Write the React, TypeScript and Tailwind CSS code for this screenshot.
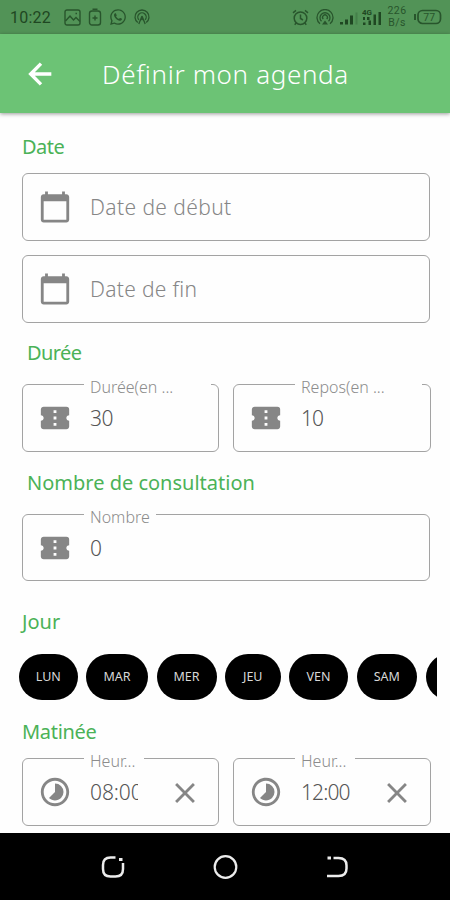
import type { ReactNode } from 'react';
import clsx from 'clsx';
import {
  MdCalendarToday,
  MdClose,
  MdConfirmationNumber,
  MdTimelapse,
} from 'react-icons/md';
import { FaWhatsapp } from 'react-icons/fa';

const days = [
  { label: 'LUN', width: 'w-[58.5px]' },
  { label: 'MAR', width: 'w-[62px]' },
  { label: 'MER', width: 'w-[60px]' },
  { label: 'JEU', width: 'w-[55.5px]' },
  { label: 'VEN', width: 'w-[59px]' },
  { label: 'SAM', width: 'w-[60.5px]' },
];

const StatusBar = () => (
  <div className="h-[34px] shrink-0 bg-[#529357] text-[#28552c] flex items-center pl-[10px] pr-2">
    <span className="w-[42px] pt-[2px] text-[16px] tracking-[0.2px] font-['Roboto',sans-serif] text-[#1f4722]">10:22</span>
    <div className="flex items-center gap-[7px] ml-3">
      <svg width="17" height="17" viewBox="0 0 17 17" fill="none" stroke="currentColor" strokeWidth="1.4">
        <rect x="1" y="1" width="15" height="15" rx="2" />
        <path d="M1.5 12l4.5-5 3.5 4 2.5-2.5 4 4M11.5 4.5h1.5" />
      </svg>
      <svg width="14" height="18" viewBox="0 0 14 18" fill="none" stroke="currentColor" strokeWidth="1.4">
        <rect x="1.5" y="3" width="11" height="14" rx="2.5" />
        <path d="M4.5 1.2h5M7 7.500v5M4.5 10h5" />
      </svg>
      <FaWhatsapp size={18} />
      <svg width="16" height="16" viewBox="0 0 16 16" fill="none" stroke="currentColor" strokeWidth="1.3">
        <path d="M3.8 13.600a7 7 0 1 1 8.400 0M4.800 10.800a4.200 4.200 0 1 1 6.400 0" />
        <path d="M8 7l-3.200 8M8 7l3.200 8M6.200 11.500L8 9.500l1.800 2" />
      </svg>
    </div>
    <div className="flex items-center ml-auto">
      <svg width="17" height="17" viewBox="0 0 17 17" fill="none" stroke="currentColor" strokeWidth="1.5">
        <circle cx="8.5" cy="9.2" r="6.3" />
        <path d="M8.5 5.5v4l2.5 1.5M1 3.8L4 1.3M16 3.8L13 1.3M4.2 14l-1.5 1.7M12.8 14l1.5 1.7" />
      </svg>
      <svg className="ml-[7px]" width="18" height="17" viewBox="0 0 18 17" fill="none" stroke="currentColor" strokeWidth="1.3">
        <path d="M4 14.800a8 8 0 1 1 10 0M5.500 12.300a5 5 0 1 1 7 0" />
        <path d="M7.300 10a2.400 2.400 0 1 1 3.400 0" />
        <path d="M6 15.500l3-4 3 4z" fill="currentColor" stroke="none" />
      </svg>
      <svg className="ml-[6px]" width="19" height="15" viewBox="0 0 19 15" fill="#1f4722">
        <path d="M0 12h3v2.500H0zM5 9.500h3v5H5zM10 5.500h3v9h-3z" />
        <path d="M15.500 2.500h2v12h-2z" opacity=".25" />
      </svg>
      <svg className="ml-[3px]" width="20" height="18" viewBox="0 0 20 18" fill="#1f4722">
        <text x="0" y="7" fontSize="8" fontWeight="700" fontFamily="Roboto, sans-serif">4G</text>
        <path d="M1 14.500h2.500V17H1zM1 9h2v3H1zM5 9h2.500v3H5zM6.500 12.500H9V17H6.500zM11.500 6.500H14V17h-2.500zM16.500 4H19v13h-2.500z" />
      </svg>
      <div className="ml-[4px] w-[22px] text-center text-[10.5px] leading-[12px] tracking-[0.4px] font-['Roboto',sans-serif]">
        <div>226</div>
        <div>B/s</div>
      </div>
      <svg className="ml-[5px]" width="29" height="16" viewBox="0 0 29 16">
        <path d="M2 5v6" stroke="currentColor" strokeWidth="2" />
        <rect x="5" y="1.500" width="22.500" height="13" rx="4.500" fill="none" stroke="currentColor" strokeWidth="1.700" />
        <text x="16.200" y="12" textAnchor="middle" fontSize="10.500" fontFamily="Roboto, sans-serif" fill="currentColor">77</text>
      </svg>
    </div>
  </div>
);

const SectionTitle = ({ children, className }: { children: ReactNode; className?: string }) => (
  <h2 className={clsx('h-7 leading-7 text-[20px] text-[#4bb257] whitespace-nowrap', className)}>{children}</h2>
);

type FieldProps = {
  icon: ReactNode;
  label?: string;
  // width of the notch cut in the top border
  notch?: string;
  className?: string;
  children: ReactNode;
};

const Field = ({ icon, label, notch, className, children }: FieldProps) => (
  <fieldset className={clsx('min-w-0 rounded-[6px] border-[1.5px] border-[#a3a3a3]', className)}>
    {label && (
      <legend className={clsx('ml-[61px] h-px pl-[6px] text-[16px] leading-px font-light text-[#8c8c8c] whitespace-nowrap', notch)}>
        <span className="block translate-y-[3px]">{label}</span>
      </legend>
    )}
    <div className="flex h-[66px] items-center pl-[15px] pr-4 text-[#868686]">
      {icon}
      <div className="ml-[18px] pt-px flex-1 flex items-center justify-between text-[21px] tracking-[0.3px] font-light whitespace-nowrap">
        {children}
      </div>
    </div>
  </fieldset>
);

const App = () => {
  return (
    <div className="w-[450px] h-[900px] overflow-hidden flex flex-col bg-[#fefefe] font-['Noto_Sans',sans-serif]">
      <StatusBar />

      {/* App bar */}
      <header className="z-10 h-[79px] shrink-0 bg-[#6cc375] flex items-center pl-[23px] text-white shadow-[0_1px_4px_rgba(0,0,0,0.4)]">
        <svg width="34" height="34" viewBox="0 0 24 24" fill="none" stroke="currentColor" strokeWidth="2.400">
          <path d="M20 12H5M12.700 4.700L5.400 12l7.300 7.300" />
        </svg>
        <h1 className="ml-[45px] pt-px text-[26px] font-light tracking-[0.65px] whitespace-nowrap">Définir mon agenda</h1>
      </header>

      <main className="flex-1 min-h-0 overflow-hidden pt-5 pl-[22px] pr-[19px]">
        <SectionTitle className="tracking-[-0.5px]">Date</SectionTitle>
        <Field icon={<MdCalendarToday size={34} />} className="mt-3 h-[68px] w-[408px]">
          <span className="tracking-[0.4px]">Date de début</span>
        </Field>
        <Field icon={<MdCalendarToday size={34} />} className="mt-[14px] h-[68px] w-[408px]">Date de fin</Field>

        <SectionTitle className="mt-4 ml-[5px] tracking-[-0.6px]">Durée</SectionTitle>
        <div className="mt-[17px] flex gap-[14px]">
          <Field icon={<MdConfirmationNumber size={34} />} label="Durée(en ..." notch="w-[127px]" className="h-[68px] w-[197px]">
            <span className="tracking-[-0.6px] text-[#555]">30</span>
          </Field>
          <Field icon={<MdConfirmationNumber size={34} />} label="Repos(en ..." notch="w-[127px]" className="h-[68px] w-[198px]">
            <span className="tracking-[-1px] text-[#555]">10</span>
          </Field>
        </div>

        <SectionTitle className="mt-[17px] ml-[5px]">Nombre de consultation</SectionTitle>
        <Field icon={<MdConfirmationNumber size={34} />} label="Nombre" notch="w-[72px]" className="mt-[17px] h-[67px] w-[408px]">
          <span className="text-[#555]">0</span>
        </Field>

        <SectionTitle className="mt-[27px]">Jour</SectionTitle>
        <div className="mt-[18px] -ml-[3px] w-[417.5px] flex gap-[8.5px] overflow-hidden">
          {days.map((day) => (
            <button
              key={day.label}
              className={clsx('h-[46px] shrink-0 rounded-full bg-black text-[12.5px] text-[#d8d8d8]', day.width)}
            >
              {day.label}
            </button>
          ))}
          <button className="h-[46px] w-[59px] shrink-0 rounded-full bg-black"></button>
        </div>

        <SectionTitle className="mt-[18px] tracking-[-0.3px]">Matinée</SectionTitle>
        <div className="mt-3 flex gap-[14px]">
          <Field icon={<MdTimelapse size={34} />} label="Heur..." notch="w-[60px]" className="h-[68px] w-[197px]">
            <span className="w-[48px] overflow-hidden tracking-[-0.1px] text-[#555]">08:00</span>
            <MdClose size={34} />
          </Field>
          <Field icon={<MdTimelapse size={34} />} label="Heur..." notch="w-[60px]" className="h-[68px] w-[198px]">
            <span className="tracking-[-0.9px] text-[#555]">12:00</span>
            <MdClose size={34} />
          </Field>
        </div>
      </main>

      {/* System navigation */}
      <nav className="h-[67px] shrink-0 bg-black flex items-center justify-center gap-[87px] text-[#ececec]">
        <svg width="24" height="24" viewBox="0 0 24 24" fill="none" stroke="currentColor" strokeWidth="2.500">
          <path d="M14.500 2.500H9.500Q2 2.500 2 10v4q0 7.500 7.500 7.500h5Q22 21.500 22 14V8" />
          <path d="M18 4.500h3.500" strokeWidth="3" />
        </svg>
        <svg width="26" height="26" viewBox="0 0 26 26" fill="none" stroke="currentColor" strokeWidth="2.200">
          <circle cx="13.500" cy="13" r="10.800" />
        </svg>
        <svg width="24" height="24" viewBox="0 0 24 24" fill="none" stroke="currentColor" strokeWidth="2.500">
          <path d="M8.500 3h5q8 0 8 7.500v3q0 7.500-8 7.500H2" />
          <path d="M2.500 3h3.500" strokeWidth="3" />
        </svg>
      </nav>
    </div>
  );
};

export default App;
